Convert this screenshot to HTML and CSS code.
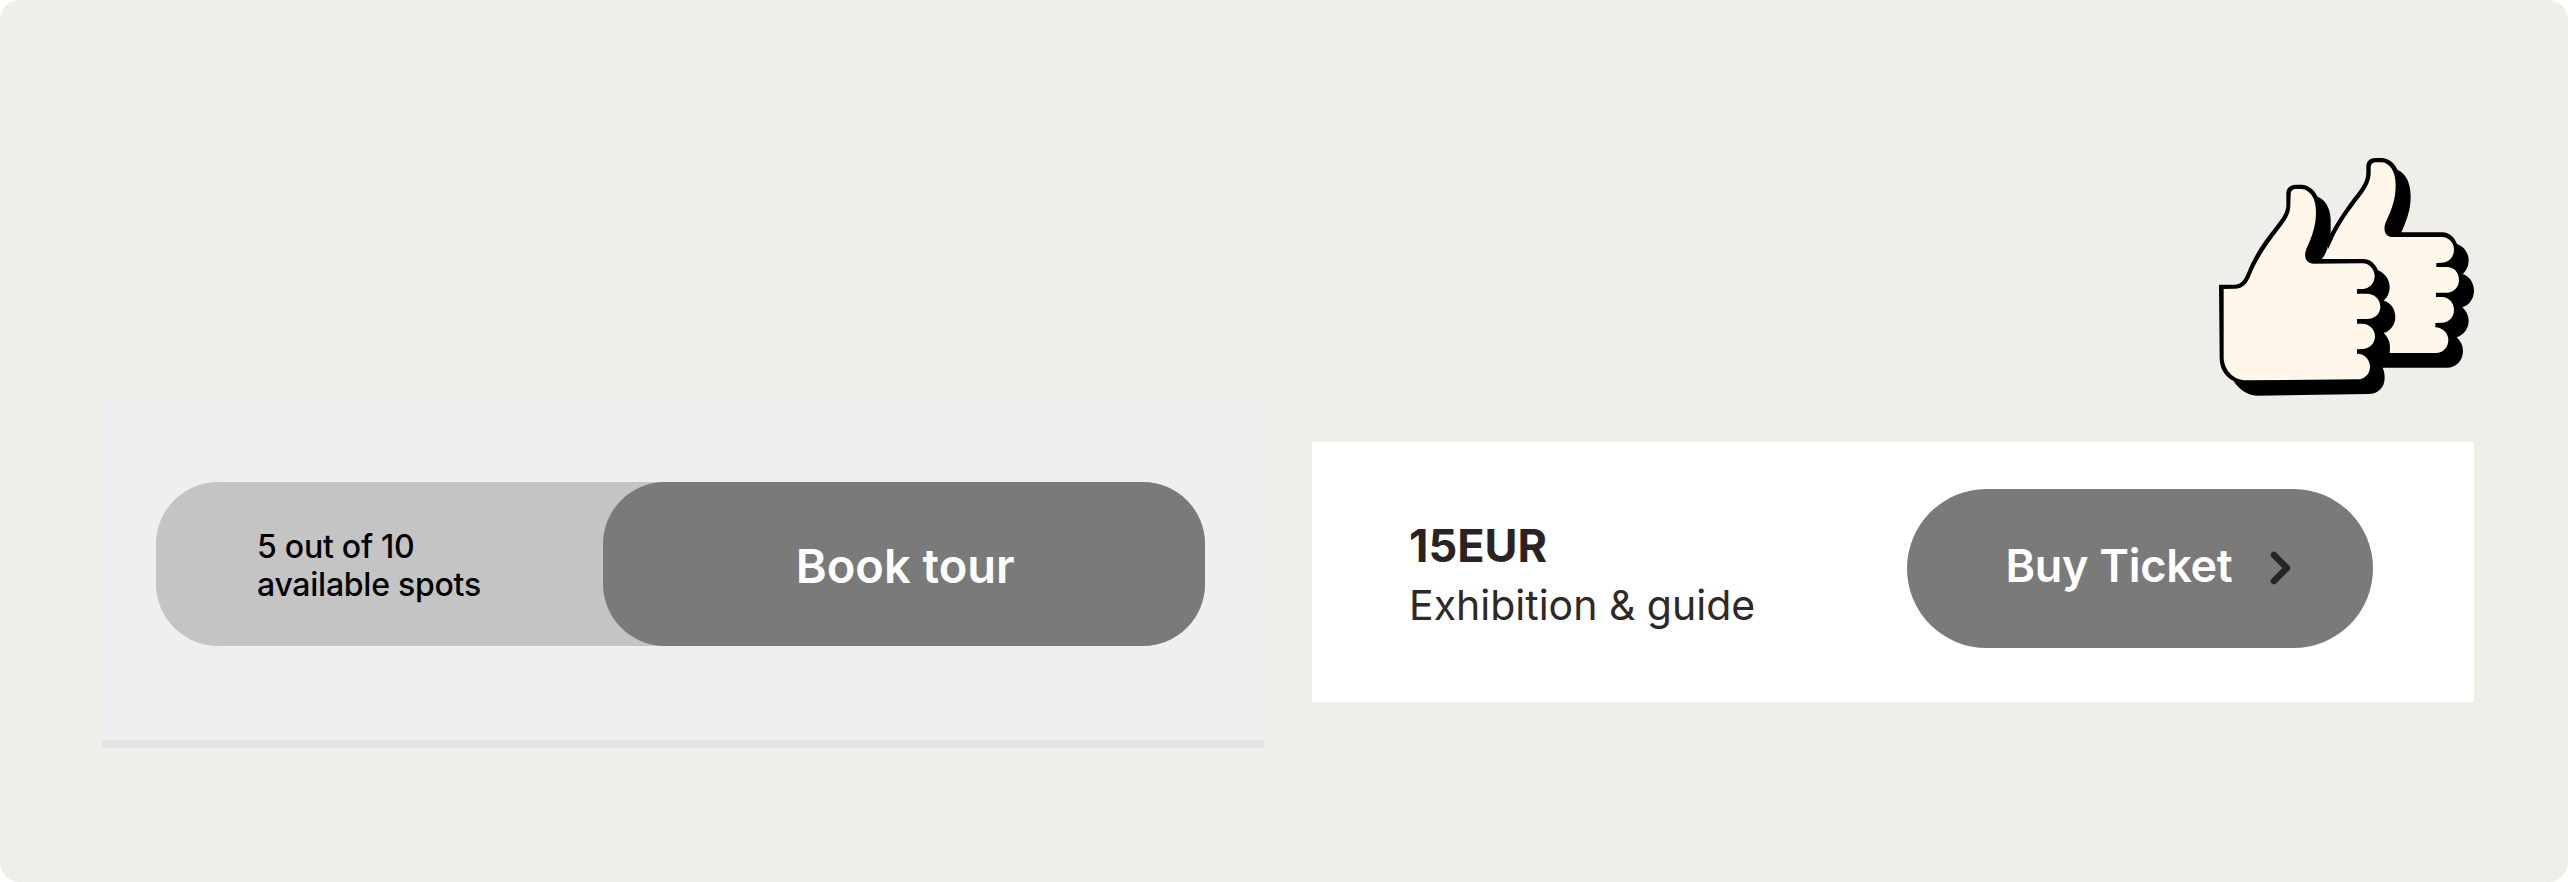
FILE: index.html
```
<!DOCTYPE html>
<html lang="en">
<head>
<meta charset="utf-8">
<title>Book tour</title>
<link rel="stylesheet" href="styles.css">
</head>
<body>
<main class="stage">
  <section class="tour-card">
    <div class="tour-pill">
      <p class="spots">5 out of 10<br>available spots</p>
      <button class="book-button"><span class="book-label">Book tour</span></button>
    </div>
  </section>
  <section class="ticket-column">
    <svg class="thumbs" viewBox="48 48 774 726" role="img" aria-label="Two thumbs up">
      <path class="ink" d="M385 300L392 280C410 245 440 200 470 162C492 133 499 118 499 95L499 80C499 63 510 54 527 54L545 54C565 55 583 68 593 90C618 100 632 130 632 170C632 210 620 240 604 277L728 277C748 278 762 290 771 312C793 320 806 340 806 361C806 378 799 393 788 402C809 408 822 430 822 452C822 475 808 495 787 502C799 513 806 528 806 543C806 565 792 585 770 592C782 603 789 617 789 632C789 662 768 683 740 683L540 683L380 400Z"/>
      <path class="skin" d="M365 357C378 342 385 325 397 300C415 258 445 215 480 170C503 140 512 120 512 98L512 83C512 72 518 67 530 67L545 67C570 69 587 95 587 135C587 175 577 205 558 245C547 270 556 291 579 291L726 291C746 291 762 308 762 329C762 351 746 368 725 368L709 369L709 381L740 381C762 381 777 397 777 420C777 442 761 458 740 458L708 458L708 471L726 471C746 471 762 488 762 510C762 532 746 548 726 548L706 549L706 562C729 563 745 580 745 600C745 623 728 639 708 639L500 639L400 380Z"/>
      <path class="ink" d="M57 434L104 434C122 434 132 422 141 400C160 350 190 305 225 262C250 230 259 215 259 195L259 160C259 145 270 134 287 134L305 134C325 135 342 148 353 170C378 180 392 208 392 240L392 285C385 315 380 342 365 357L490 357C510 357 525 370 534 391C556 400 569 420 569 441C569 458 562 473 551 482C572 487 586 507 586 531C586 555 570 574 551 579C563 590 570 605 570 622C570 650 562 672 548 684C552 693 554 702 554 713C554 742 534 762 505 762L170 767C140 765 115 745 100 722C75 710 58 685 59 650Z"/>
      <path class="skin" d="M71 447L104 446C130 446 142 430 152 405C170 360 200 315 235 270C262 235 271 220 271 195L272 163C272 153 278 147 289 147L305 147C330 149 348 175 348 215C348 255 338 285 320 325C309 350 318 371 342 371L488 370C508 370 524 388 524 409C524 430 508 447 487 447L471 447L471 461L500 461C523 461 541 477 541 500C541 522 523 537 500 537L471 537L471 551L487 551C508 551 525 568 525 589C525 611 508 627 487 627L471 628L471 641C495 641 510 660 510 680C510 702 494 718 472 718L135 721C95 718 71 685 71 650Z"/>
    </svg>
    <div class="ticket-card">
      <div class="offer">
        <p class="price">15EUR</p>
        <p class="detail">Exhibition &amp; guide</p>
      </div>
      <button class="buy-button">
        <span class="buy-label">Buy Ticket</span>
        <svg class="chevron" viewBox="0 0 24 36"><path d="M5 5L18 18L5 31"/></svg>
      </button>
    </div>
  </section>
</main>
</body>
</html>
```
FILE: styles.css
```
* { box-sizing: border-box; }
body { margin: 0; background: #fff; font-family: Inter, "Liberation Sans", sans-serif; }
p { margin: 0; white-space: nowrap; }
button { margin: 0; padding: 0; border: 0; font-family: inherit; white-space: nowrap; }
.stage {
  display: grid;
  grid-template-columns: 1162px 1162px;
  column-gap: 48px;
  align-items: start;
  height: 882px;
  padding: 156px 94px 0 102px;
  border-radius: 20px;
  background: #efeee9;
}
.tour-card {
  height: 352px;
  margin-top: 240px;
  padding: 86px 59px 0 54px;
  border-bottom: 8px solid #e4e4e4;
  background: #efefef;
}
.tour-pill {
  display: flex;
  justify-content: space-between;
  align-items: center;
  height: 163.5px;
  padding-left: 101px;
  border-radius: 62px;
  background: #c4c4c4;
}
.spots { padding-top: 4px; font-size: 32px; line-height: 38px; letter-spacing: -0.25px; color: #000; font-weight: 450; }
.book-button {
  width: 602.5px;
  height: 100%;
  padding: 3px 0 0 3px;
  border-radius: 62px;
  background: #7a7a7a;
  color: #fff;
  font-size: 47px;
  font-weight: 600;
}
.ticket-column { display: flex; flex-direction: column; align-items: flex-end; gap: 44px; }
.thumbs { display: block; width: 258px; height: 242px; }
.ink { fill: #000; }
.skin { fill: #fff7ea; }
.ticket-card {
  display: flex;
  justify-content: space-between;
  align-items: center;
  width: 1162px;
  height: 260px;
  padding: 0 101px 7px 97px;
  background: #fff;
}
.offer { padding-top: 14px; }
.price { font-size: 45px; line-height: 58px; font-weight: 700; color: #2a2223; }
.detail { font-size: 41px; line-height: 60px; color: #2f2829; }
.buy-button {
  display: flex;
  align-items: center;
  width: 466.5px;
  height: 159.5px;
  padding: 0 0 2px 99px;
  border-radius: 80px;
  background: #7a7a7a;
}
.buy-label { width: 263px; padding-bottom: 5px; text-align: left; color: #fff; font-size: 45px; font-weight: 600; letter-spacing: -0.3px; }
.chevron { width: 24px; height: 36px; fill: none; stroke: #242424; stroke-width: 6.5; stroke-linecap: round; stroke-linejoin: round; }
```
